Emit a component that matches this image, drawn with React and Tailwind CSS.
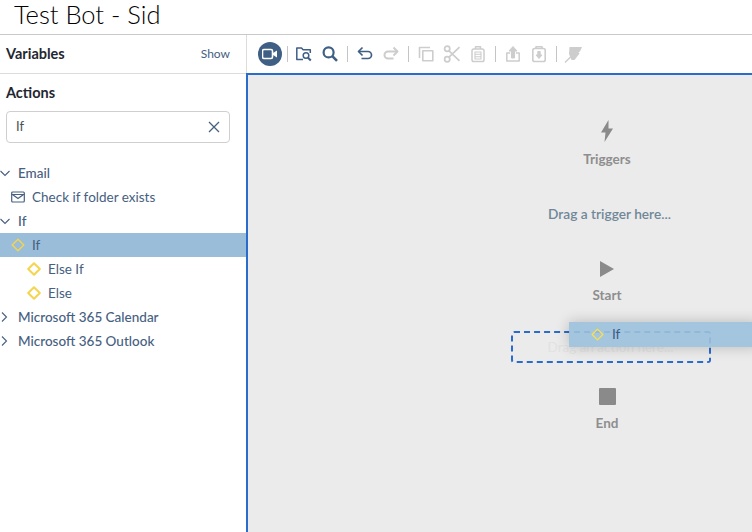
const navy = "#3f5f85";

function Chevron({ open }) {
  return (
    <svg width="10" height="10" viewBox="0 0 10 10" fill="none" stroke="#46607f" strokeWidth="1.1" className="shrink-0">
      {open ? <path d="M.5 3l4.500 4.500L9.500 3" /> : <path d="M2 .5L6.500 5 2 9.500" />}
    </svg>
  );
}

function Diamond({ size = 14, width = 2, color = "#f5d44f" }) {
  return (
    <svg width={size} height={size} viewBox="0 0 14 14" fill="none" stroke={color} strokeWidth={width} className="shrink-0">
      <path d="M7 1.200L12.800 7 7 12.800 1.200 7z" strokeLinejoin="round" />
    </svg>
  );
}

function Row({ className = "", children }) {
  return <div className={`flex h-6 items-center text-[13.5px] text-[#46607f] ${className}`}>{children}</div>;
}

function Divider() {
  return <div className="mx-[4px] h-4 w-px bg-[#c4c4c4]" />;
}

function Tool({ children }) {
  return <div className="flex h-[18px] w-[26px] items-center justify-center">{children}</div>;
}

function G({ children, color = "#cdcdcd", w = 2 }) {
  return (
    <svg width="18" height="18" viewBox="0 0 18 18" fill="none" stroke={color} strokeWidth={w} strokeLinejoin="round">
      {children}
    </svg>
  );
}

function Toolbar() {
  return (
    <div className="flex h-[38px] items-center border-l border-[#dcdcdc] pl-[11px]">
      <div className="flex h-6 w-6 items-center justify-center rounded-full bg-[#3f5f85]">
        <svg width="16" height="12" viewBox="0 0 16 12" fill="#fff">
          <rect x="0.500" y="1.500" width="10" height="9" rx="1.500" fill="none" stroke="#fff" strokeWidth="1.600" />
          <path d="M11 5l4-2.500v7L11 7z" />
        </svg>
      </div>
      <div className="ml-[5px] mr-[3px] h-4 w-px bg-[#c4c4c4]" />
      <Tool>
        <G color={navy} w={1.5}>
          <path d="M8 14.500H1.800V3h4.700l1.600 1.800h7.200V8" />
          <circle cx="11" cy="10.500" r="2.800" />
          <path d="M13 12.700l2.800 2.800" strokeWidth="2" />
        </G>
      </Tool>
      <Tool>
        <G color={navy} w={2.200}>
          <circle cx="7.600" cy="7.400" r="5" />
          <path d="M11.300 11.100l4.700 4.700" strokeWidth="2.600" />
        </G>
      </Tool>
      <Divider />
      <Tool>
        <G color={navy} w={1.700}>
          <path d="M2.600 6.500h9.400a3.500 3.500 0 010 7H5.500" />
          <path d="M6.500 2.500L2.500 6.500l4 4" />
        </G>
      </Tool>
      <Tool>
        <G>
          <path d="M15.400 6.500H6a3.500 3.500 0 000 7h5.500" />
          <path d="M11.500 2.500l4 4-4 4" />
        </G>
      </Tool>
      <Divider />
      <Tool>
        <G w={1.600}>
          <path d="M2.500 13V2.500H13" />
          <rect x="5.800" y="5.800" width="10" height="10" />
        </G>
      </Tool>
      <Tool>
        <G w={1.700}>
          <circle cx="4.200" cy="3.800" r="2.600" />
          <circle cx="4.200" cy="14.200" r="2.600" />
          <path d="M6 5.800l10.500 10M6 12.200L16.500 2.200" />
        </G>
      </Tool>
      <Tool>
        <G w={1.500}>
          <rect x="3" y="4" width="12" height="12.500" rx="1.800" />
          <path d="M6.500 4V1.800h5V4" />
          <rect x="6" y="7" width="6" height="7" strokeWidth="1.100" />
          <path d="M6 9.300h6M6 11.700h6" strokeWidth="1.100" />
        </G>
      </Tool>
      <Divider />
      <Tool>
        <G w={1.500}>
          <path d="M6.200 8H2.800v8h12.400V8h-3.400" />
          <path d="M7.500 13V6H5l4-4.500L13 6h-2.500v7z" fill="#cdcdcd" strokeWidth="1" />
        </G>
      </Tool>
      <Tool>
        <G w={1.600}>
          <rect x="2.800" y="3.500" width="12.400" height="13" rx="1.800" />
          <path d="M6 3.500V1.800h6v1.700" />
          <path d="M7.800 6.500h2.400v3.500H12l-3 3.500L6 10h1.800z" fill="#cdcdcd" strokeWidth="1" />
        </G>
      </Tool>
      <Divider />
      <Tool>
        <svg width="20" height="20" viewBox="0 0 20 20" fill="#cdcdcd">
          <path d="M5.500 3H18l-2 4.500-1.500.5 1 1.500-5 6.500H7.500L5 10z" />
          <path d="M1 18.500L16 3.500" stroke="#cdcdcd" strokeWidth="1.500" />
        </svg>
      </Tool>
    </div>
  );
}

function Sidebar() {
  return (
    <aside className="flex w-[246px] shrink-0 flex-col">
      <div className="flex h-[39px] items-center justify-between border-b border-[#dcdcdc] pl-[6px] pr-[16px]">
        <span className="text-[14.500px] font-bold text-[#1f2730]">Variables</span>
        <span className="text-[12px] text-[#46607f]">Show</span>
      </div>
      <div className="flex h-[37px] items-center pl-[6px] text-[14.500px] font-bold text-[#1f2730]">Actions</div>
      <div className="ml-[6px] flex h-8 w-[224px] items-center justify-between rounded border border-[#cfcfcf] pl-[9px] pr-[9px]">
        <span className="text-[13px] text-[#4a4f55]">If</span>
        <svg width="12" height="12" viewBox="0 0 12 12" fill="none" stroke="#46607f" strokeWidth="1.300">
          <path d="M1 1l10 10M11 1L1 11" />
        </svg>
      </div>
      <div className="mt-[18px] flex flex-col">
        <Row className="font-medium">
          <Chevron open />
          <span className="ml-2">Email</span>
        </Row>
        <Row className="pl-[11px]">
          <svg width="14" height="12" viewBox="0 0 14 12" fill="none" stroke="#46607f" strokeWidth="1.200" className="shrink-0">
            <rect x="0.700" y="1" width="12.600" height="10" rx="1" />
            <path d="M.700 3.500h12.600M1.500 3.500L7 7.500l5.500-4" />
          </svg>
          <span className="ml-[7px]">Check if folder exists</span>
        </Row>
        <Row className="font-medium">
          <Chevron open />
          <span className="ml-2">If</span>
        </Row>
        <Row className="bg-[#9abdd9] pl-[11px]">
          <Diamond width={1.400} />
          <span className="ml-[7px]">If</span>
        </Row>
        <Row className="pl-[27px]">
          <Diamond />
          <span className="ml-[7px]">Else If</span>
        </Row>
        <Row className="pl-[27px]">
          <Diamond />
          <span className="ml-[7px]">Else</span>
        </Row>
        <Row className="font-medium">
          <Chevron />
          <span className="ml-2">Microsoft 365 Calendar</span>
        </Row>
        <Row className="font-medium">
          <Chevron />
          <span className="ml-2">Microsoft 365 Outlook</span>
        </Row>
      </div>
    </aside>
  );
}

function Canvas() {
  return (
    <div className="relative flex-1 overflow-hidden border-l-2 border-t-2 border-[#2a6ccb] bg-[#ebebeb] pl-[214px]">
      <div className="flex flex-col items-center pt-[45px] text-[13.500px] font-bold text-[#8e8e8e]">
        <svg width="14" height="22" viewBox="0 0 14 22" fill="#8a8a8a">
          <path d="M8.500 0L1 12.500h4.500L4.500 22l8.500-13.500H8.500z" />
        </svg>
        <div className="mt-[9px] leading-4">Triggers</div>
        <div className="ml-[5px] mt-[39px] text-[13.700px] font-semibold leading-4 text-[#6f8798]">Drag a trigger here...</div>
        <svg width="16" height="16" viewBox="0 0 16 16" fill="#8a8a8a" className="mt-[39px]">
          <path d="M1 0l14 8-14 8z" />
        </svg>
        <div className="mt-[10px] leading-4">Start</div>
        <div className="ml-[7px] mt-[28px] flex h-[32px] w-[200px] items-center justify-center rounded-[3px] border-2 border-dashed border-[#2a6ccb] font-normal text-[#e2e2e2]">
          Drag an action here...
        </div>
        <div className="mt-[25px] h-[17px] w-[17px] rounded-[1px] bg-[#8a8a8a]" />
        <div className="mt-[10px] leading-4">End</div>
      </div>
      <div className="absolute left-[321px] top-[247px] flex h-[25px] w-[190px] items-center bg-[#9cc1dd]/90 pl-[22px] text-[13.500px] text-[#3a5a85] shadow-[0_0_14px_rgba(0,0,0,0.22)]">
        <Diamond size={13} width={1.300} color="#fbe04a" />
        <span className="ml-[8px]">If</span>
      </div>
    </div>
  );
}

export default function App() {
  return (
    <div className="flex h-[532px] w-[752px] flex-col overflow-hidden bg-white font-['Lato','Noto_Sans',sans-serif]">
      <header className="flex h-[35px] shrink-0 items-center border-b border-[#c9c9c9] pb-[5px] pl-[14px] text-[25.500px] font-light text-black">
        Test Bot - Sid
      </header>
      <div className="flex min-h-0 flex-1">
        <Sidebar />
        <div className="flex min-w-0 flex-1 flex-col">
          <Toolbar />
          <Canvas />
        </div>
      </div>
    </div>
  );
}
